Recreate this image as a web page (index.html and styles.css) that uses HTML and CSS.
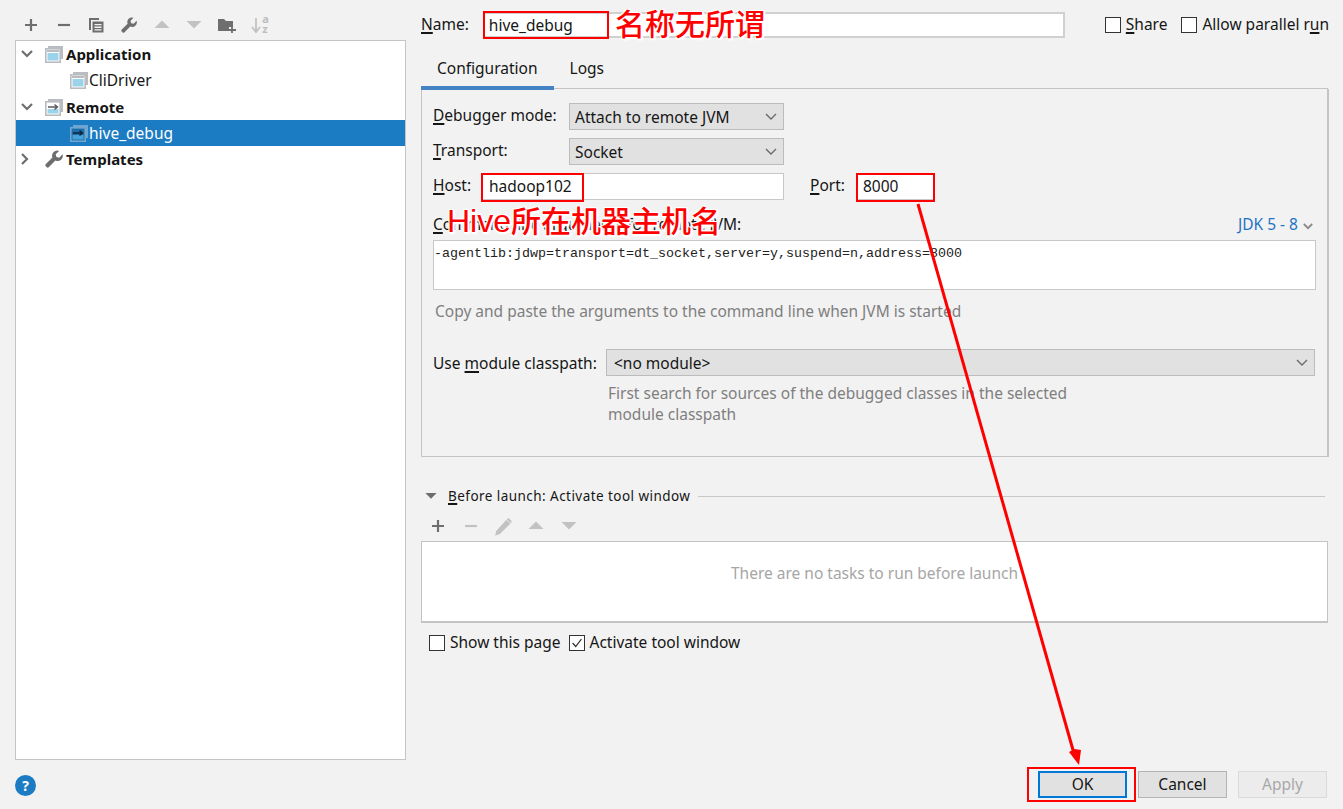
FILE: index.html
```html
<!DOCTYPE html>
<html lang="en">
<head>
<meta charset="utf-8">
<title>Run/Debug Configurations</title>
<link rel="stylesheet" href="styles.css">
</head>
<body>
<svg width="0" height="0" class="defs">
  <defs>
    <symbol id="i-plus" viewBox="0 0 16 16"><path d="M8 2v12M2 8h12" stroke="currentColor" stroke-width="2.2" fill="none"/></symbol>
    <symbol id="i-minus" viewBox="0 0 16 16"><path d="M2 8h12" stroke="currentColor" stroke-width="2.2" fill="none"/></symbol>
    <symbol id="i-copy" viewBox="0 0 16 16"><path d="M1 1h10v2H3v10H1z" fill="currentColor"/><path d="M4.500 4.500h11v11h-11z" fill="currentColor"/><path d="M6.500 7h7v1.300h-7zM6.500 9.600h7v1.300h-7zM6.500 12.200h7v1.300h-7z" fill="#f2f2f2"/></symbol>
    <symbol id="i-wrench" viewBox="0 0 16 16"><path d="M15.600 3.800l-3 3-2.400-.6-.7-2.400 3-3A4.600 4.600 0 0 0 6.600 6.700L.8 12.500a1.500 1.500 0 0 0 0 2.100l.6.6a1.500 1.500 0 0 0 2.100 0l5.800-5.800a4.600 4.600 0 0 0 6.300-5.600z" fill="currentColor"/></symbol>
    <symbol id="i-up" viewBox="0 0 16 16"><path d="M8 3.500L15.500 11H.5z" fill="currentColor"/></symbol>
    <symbol id="i-down" viewBox="0 0 16 16"><path d="M.5 4h15L8 11.500z" fill="currentColor"/></symbol>
    <symbol id="i-folder" viewBox="0 0 18 16"><path d="M0 1h6l2 2h7v6h-4v4H0z" fill="currentColor"/><path d="M14 9v6M11 12h7" stroke="currentColor" stroke-width="1.800" fill="none"/></symbol>
    <symbol id="i-sort" viewBox="0 0 18 18"><path d="M5 1v13M1 10l4 5 4-5" stroke="currentColor" stroke-width="1.800" fill="none"/></symbol>
    <symbol id="i-pencil" viewBox="0 0 16 16"><path d="M11 1.500l3.500 3.500L5 14.500 1 15.500l1-4zM12 .5a1 1 0 0 1 1.400 0l2 2a1 1 0 0 1 0 1.400l-.6.6-3.400-3.400z" fill="currentColor"/></symbol>
    <symbol id="i-app" viewBox="0 0 18 18"><path d="M3 1h15v13h-2V3H3z" fill="#b9bcc0"/><rect x="0.8" y="3.800" width="14.400" height="13.400" fill="#fff" stroke="#b9bcc0" stroke-width="1.600"/><rect x="2" y="5" width="12" height="2" fill="#b9bcc0"/><rect x="2.500" y="8" width="11" height="7.500" fill="#9bd3ea"/></symbol>
    <symbol id="i-remote" viewBox="0 0 18 18"><path d="M3 1h15v13h-2V3H3z" fill="#b9bcc0"/><rect x="0.8" y="3.800" width="14.400" height="13.400" fill="#fff" stroke="#b9bcc0" stroke-width="1.600"/><rect x="2.500" y="11" width="11" height="4.500" fill="#9bd3ea"/><path d="M3 9h9M9.500 6.500L12.500 9l-3 2.500" stroke="#5a5a5a" stroke-width="1.400" fill="none"/></symbol>
    <symbol id="i-remote-sel" viewBox="0 0 18 18"><path d="M3 1h15v13h-2V3H3z" fill="#6ea6d1"/><rect x="0.8" y="3.800" width="14.400" height="13.400" fill="#1b6ea9" stroke="#6ea6d1" stroke-width="1.600"/><rect x="2.500" y="11" width="11" height="4.500" fill="#46a2d8"/><path d="M3 9h9M9.500 6.500L12.500 9l-3 2.500" stroke="#10253a" stroke-width="1.400" fill="none"/></symbol>
    <symbol id="i-chev-down" viewBox="0 0 12 8"><path d="M1 1l5 5 5-5" stroke="currentColor" stroke-width="1.400" fill="none"/></symbol>
    <symbol id="i-chev-bold" viewBox="0 0 12 8"><path d="M1 1l5 5 5-5" stroke="currentColor" stroke-width="2.200" fill="none"/></symbol>
    <symbol id="i-chev-right" viewBox="0 0 8 12"><path d="M1 1l5 5-5 5" stroke="currentColor" stroke-width="2.200" fill="none"/></symbol>
  </defs>
</svg>

<div class="dialog">
  <div class="main">
    <aside class="left">
      <div class="toolbar">
        <span class="tool dark"><svg class="ic16"><use href="#i-plus"/></svg></span>
        <span class="tool dark"><svg class="ic16"><use href="#i-minus"/></svg></span>
        <span class="tool dark"><svg class="ic16"><use href="#i-copy"/></svg></span>
        <span class="tool dark"><svg class="ic16"><use href="#i-wrench"/></svg></span>
        <span class="tool off"><svg class="ic16"><use href="#i-up"/></svg></span>
        <span class="tool off"><svg class="ic16"><use href="#i-down"/></svg></span>
        <span class="tool dark"><svg class="ic18"><use href="#i-folder"/></svg></span>
        <span class="tool off sort"><svg class="ic18"><use href="#i-sort"/></svg><span class="az">a<br>z</span></span>
      </div>
      <div class="tree">
        <div class="row"><svg class="chev-d"><use href="#i-chev-bold"/></svg><svg class="ticon"><use href="#i-app"/></svg><b>Application</b></div>
        <div class="row child"><svg class="ticon"><use href="#i-app"/></svg><span>CliDriver</span></div>
        <div class="row"><svg class="chev-d"><use href="#i-chev-bold"/></svg><svg class="ticon"><use href="#i-remote"/></svg><b>Remote</b></div>
        <div class="row child selected"><svg class="ticon"><use href="#i-remote-sel"/></svg><span>hive_debug</span></div>
        <div class="row"><svg class="chev-r"><use href="#i-chev-right"/></svg><svg class="ticon wr"><use href="#i-wrench"/></svg><b>Templates</b></div>
      </div>
    </aside>

    <section class="right">
      <div class="name-row">
        <label class="name-label"><u>N</u>ame:</label>
        <div class="field name-field">hive_debug</div>
        <span class="check share"><i class="box"></i><span><u>S</u>hare</span></span>
        <span class="check"><i class="box"></i><span>Allow parallel r<u>u</u>n</span></span>
      </div>

      <div class="tabs">
        <span class="tab active">Configuration</span>
        <span class="tab">Logs</span>
      </div>

      <div class="panel">
        <div class="form-row first">
          <label class="lbl"><u>D</u>ebugger mode:</label>
          <div class="select sm">Attach to remote JVM<svg class="sel-chev"><use href="#i-chev-down"/></svg></div>
        </div>
        <div class="form-row">
          <label class="lbl"><u>T</u>ransport:</label>
          <div class="select sm">Socket<svg class="sel-chev"><use href="#i-chev-down"/></svg></div>
        </div>
        <div class="form-row host-row">
          <label class="lbl host-lbl"><u>H</u>ost:</label>
          <div class="field host">hadoop102</div>
          <label class="lbl port-lbl"><u>P</u>ort:</label>
          <div class="field port">8000</div>
        </div>
        <div class="cmd-head">
          <label class="lbl"><u>C</u>ommand line arguments for remote JVM:</label>
          <span class="jdk">JDK 5 - 8<svg class="jdk-chev"><use href="#i-chev-bold"/></svg></span>
        </div>
        <div class="cmd">-agentlib:jdwp=transport=dt_socket,server=y,suspend=n,address=8000</div>
        <p class="hint cmd-hint">Copy and paste the arguments to the command line when JVM is started</p>
        <div class="form-row module-row">
          <label class="lbl">Use <u>m</u>odule classpath:</label>
          <div class="select wide">&lt;no module&gt;<svg class="sel-chev"><use href="#i-chev-down"/></svg></div>
        </div>
        <p class="hint mod-hint">First search for sources of the debugged classes in the selected<br>module classpath</p>
      </div>

      <div class="before">
        <svg class="tri"><use href="#i-down"/></svg>
        <span class="before-title"><u>B</u>efore launch: Activate tool window</span>
        <span class="before-line"></span>
      </div>
      <div class="toolbar sub">
        <span class="tool dark"><svg class="ic16"><use href="#i-plus"/></svg></span>
        <span class="tool off"><svg class="ic16"><use href="#i-minus"/></svg></span>
        <span class="tool off"><svg class="ic18"><use href="#i-pencil"/></svg></span>
        <span class="tool off"><svg class="ic16"><use href="#i-up"/></svg></span>
        <span class="tool off"><svg class="ic16"><use href="#i-down"/></svg></span>
      </div>
      <div class="tasks">There are no tasks to run before launch</div>
      <div class="bottom-checks">
        <span class="check"><i class="box"></i><span>Show this page</span></span>
        <span class="check"><i class="box on"><svg viewBox="0 0 16 16"><path d="M3 8l3.500 4L13 3.500" stroke="#333" stroke-width="1.400" fill="none"/></svg></i><span>Activate tool window</span></span>
      </div>
    </section>
  </div>

  <footer class="footer">
    <span class="help">?</span>
    <div class="buttons">
      <span class="btn default">OK</span>
      <span class="btn">Cancel</span>
      <span class="btn disabled">Apply</span>
    </div>
  </footer>
</div>

<svg class="marks" width="1343" height="809" viewBox="0 0 1343 809">
  <g fill="none" stroke="#f00" stroke-width="2">
    <rect x="484" y="12" width="124" height="26"/>
    <rect x="482" y="174" width="101" height="27"/>
    <rect x="857" y="174" width="77" height="27"/>
    <rect x="1028" y="768" width="107" height="33"/>
  </g>
  <path d="M918 204L1075 757" stroke="#f00" stroke-width="3" fill="none"/>
  <path d="M1079 765L1069 752 1074.500 749 1081 750z" fill="#f00"/>
</svg>
<div class="note note-name">名称无所谓</div>
<div class="note note-host"><span class="hive">Hive</span>所在机器主机名</div>
</body>
</html>
```
FILE: styles.css
```css
* { box-sizing: border-box; }
html, body { margin: 0; padding: 0; }
body {
  width: 1343px; height: 809px; overflow: hidden; position: relative;
  background: #f2f2f2; color: #161616;
  font-family: "Noto Sans", "Noto Sans CJK SC", sans-serif; font-size: 15.5px; line-height: 20px;
}
u { text-underline-offset: 2px; text-decoration-thickness: 1.5px; }
.defs { position: absolute; }
.dialog { display: flex; flex-direction: column; height: 809px; padding-left: 15px; }
.main { display: flex; gap: 15px; height: 760px; }

.left { width: 391px; display: flex; flex-direction: column; }
.toolbar { display: flex; height: 40px; padding-top: 17px; }
.tool { width: 32.6px; height: 23px; display: flex; justify-content: center; position: relative; }
.tool.dark { color: #6e6e6e; }
.tool.off { color: #c2c2c2; }
.ic16 { width: 16px; height: 16px; }
.ic18 { width: 18px; height: 18px; }
.sort { justify-content: flex-start; padding-left: 8px; }
.az { position: absolute; left: 19px; top: -3px; font-size: 11px; line-height: 10px; font-weight: 700; color: #bdbdbd; }

.tree { flex: 1; background: #fff; border: 1px solid #c4c4c4; }
.row { height: 26.25px; display: flex; align-items: center; padding-left: 5px; position: relative; }
.row b { font-weight: 700; font-size: 15px; margin-left: 3px; }
.chev-d { width: 12px; height: 8px; color: #6e6e6e; margin-right: 12px; }
.chev-r { width: 8px; height: 12px; color: #6e6e6e; margin-right: 16px; margin-left: 0; }
.ticon { width: 18px; height: 18px; flex: none; }
.wr { color: #6e6e6e; }
.child { padding-left: 54px; }
.child span { margin-left: 1px; }
.selected { background: #1b7bc3; color: #fff; }

.right { width: 908px; }
.name-row { display: flex; align-items: center; height: 26px; margin-top: 12px; }
.name-label { width: 62px; position: relative; top: -1px; }
.field { background: #fff; border: 1px solid #c8c8c8; padding-left: 7px; height: 26px; line-height: 24px; }
.name-field { width: 582px; flex: none; border-width: 2px; border-color: #d0d0d0; line-height: 22px; padding-left: 4px; }
.check { display: inline-flex; align-items: center; gap: 5px; white-space: nowrap; flex: none; }
.check span { position: relative; top: -1px; }
.share { margin-left: 40px; margin-right: 14px; }
.box { display: block; width: 16px; height: 16px; border: 1px solid #333; background: #fff; flex: none; }
.box svg { display: block; width: 14px; height: 14px; }

.tabs { display: flex; height: 37px; margin-top: 14px; margin-right: 1px; border-bottom: 1px solid #c4c4c4; position: relative; }
.tab { padding: 6px 16px 0; }
.tab.active { border-bottom: 4px solid #4483c4; height: 38px; }

.panel { height: 368px; border: 1px solid #c4c4c4; border-top: 0; border-right-width: 2px; padding: 14px 11px 0; width: 908px; }
.form-row { display: flex; align-items: center; height: 27px; margin-bottom: 8px; }
.lbl { display: block; width: 136px; flex: none; position: relative; top: -2px; white-space: nowrap; }
.select { background: #e1e1e1; border: 1px solid #bcbcbc; height: 27px; line-height: 26px; padding-left: 5px; position: relative; }
.sm { width: 215px; }
.wide { width: 709px; padding-left: 7px; }
.sel-chev { position: absolute; right: 6px; top: 9px; width: 12px; height: 8px; color: #6a6a6a; }
.host-lbl { width: 48px; }
.host { width: 303px; height: 27px; line-height: 25px; }
.port-lbl { width: 47px; margin-left: 26px; }
.port { width: 78px; height: 27px; line-height: 25px; padding-left: 5px; }
.cmd-head { display: flex; justify-content: space-between; height: 26px; margin-top: 14px; }
.cmd-head .lbl { top: 0; }
.jdk { color: #1f73c4; margin-right: 3px; }
.jdk-chev { width: 10px; height: 7px; color: #8a8a8a; margin-left: 5px; }
.cmd {
  width: 883px; height: 50px; background: #fff; border: 1px solid #c8c8c8;
  font-family: "Liberation Mono", monospace; font-size: 13.33px; line-height: 25px; color: #222;
}
.hint { margin: 0; color: #7f7f7f; }
.cmd-hint { margin-top: 11px; padding-left: 2px; }
.module-row { margin-top: 28px; margin-bottom: 7px; }
.module-row .lbl { width: 173px; top: 0; }
.mod-hint { padding-left: 175px; line-height: 21px; }

.before { display: flex; align-items: center; height: 20px; margin-top: 29px; }
.tri { width: 12px; height: 12px; color: #6e6e6e; margin-left: 4px; flex: none; }
.before-title { margin-left: 11px; font-size: 13.5px; letter-spacing: .45px; }
.before-line { flex: 1; height: 1px; background: #c8c8c8; margin-left: 8px; margin-right: 4px; }
.toolbar.sub { height: 35px; padding-top: 12px; padding-left: 1px; }
.tasks { height: 82px; background: #fff; border: 1px solid #c4c4c4; border-bottom-width: 2px; color: #a6a6a6; text-align: center; line-height: 62px; width: 907px; }
.bottom-checks { display: flex; gap: 8px; margin-top: 10px; padding-left: 8px; }

.footer { flex: 1; display: flex; justify-content: space-between; align-items: flex-start; padding-right: 16px; padding-top: 11px; }
.help { width: 21px; height: 21px; border-radius: 50%; background: #1b7bc3; color: #fff; text-align: center; font-size: 14px; line-height: 21px; font-weight: 700; margin-top: 4px; }
.buttons { display: flex; gap: 11px; }
.btn { width: 89px; height: 27px; background: #e1e1e1; border: 1px solid #b4b4b4; text-align: center; line-height: 25px; }
.btn.default { border: 2px solid #0078d7; line-height: 23px; }
.btn.disabled { background: #ececec; border-color: #dadada; color: #a8a8a8; }

.marks { position: absolute; left: 0; top: 0; pointer-events: none; }
.note {
  position: absolute; color: #f00; font-family: "Liberation Sans", "Noto Sans CJK SC", sans-serif; font-size: 30px; line-height: 36px; font-weight: 500; white-space: nowrap;
  text-shadow: 1px 1px 0 #fff, -1px -1px 0 #fff, 1px -1px 0 #fff, -1px 1px 0 #fff, 2px 2px 2px #fff, 0 2px 1px #fff, 2px 0 1px #fff;
}
.note-name { left: 615px; top: 7px; }
.note-host { left: 447px; top: 203px; }
.hive { font-size: 32px; }
```
